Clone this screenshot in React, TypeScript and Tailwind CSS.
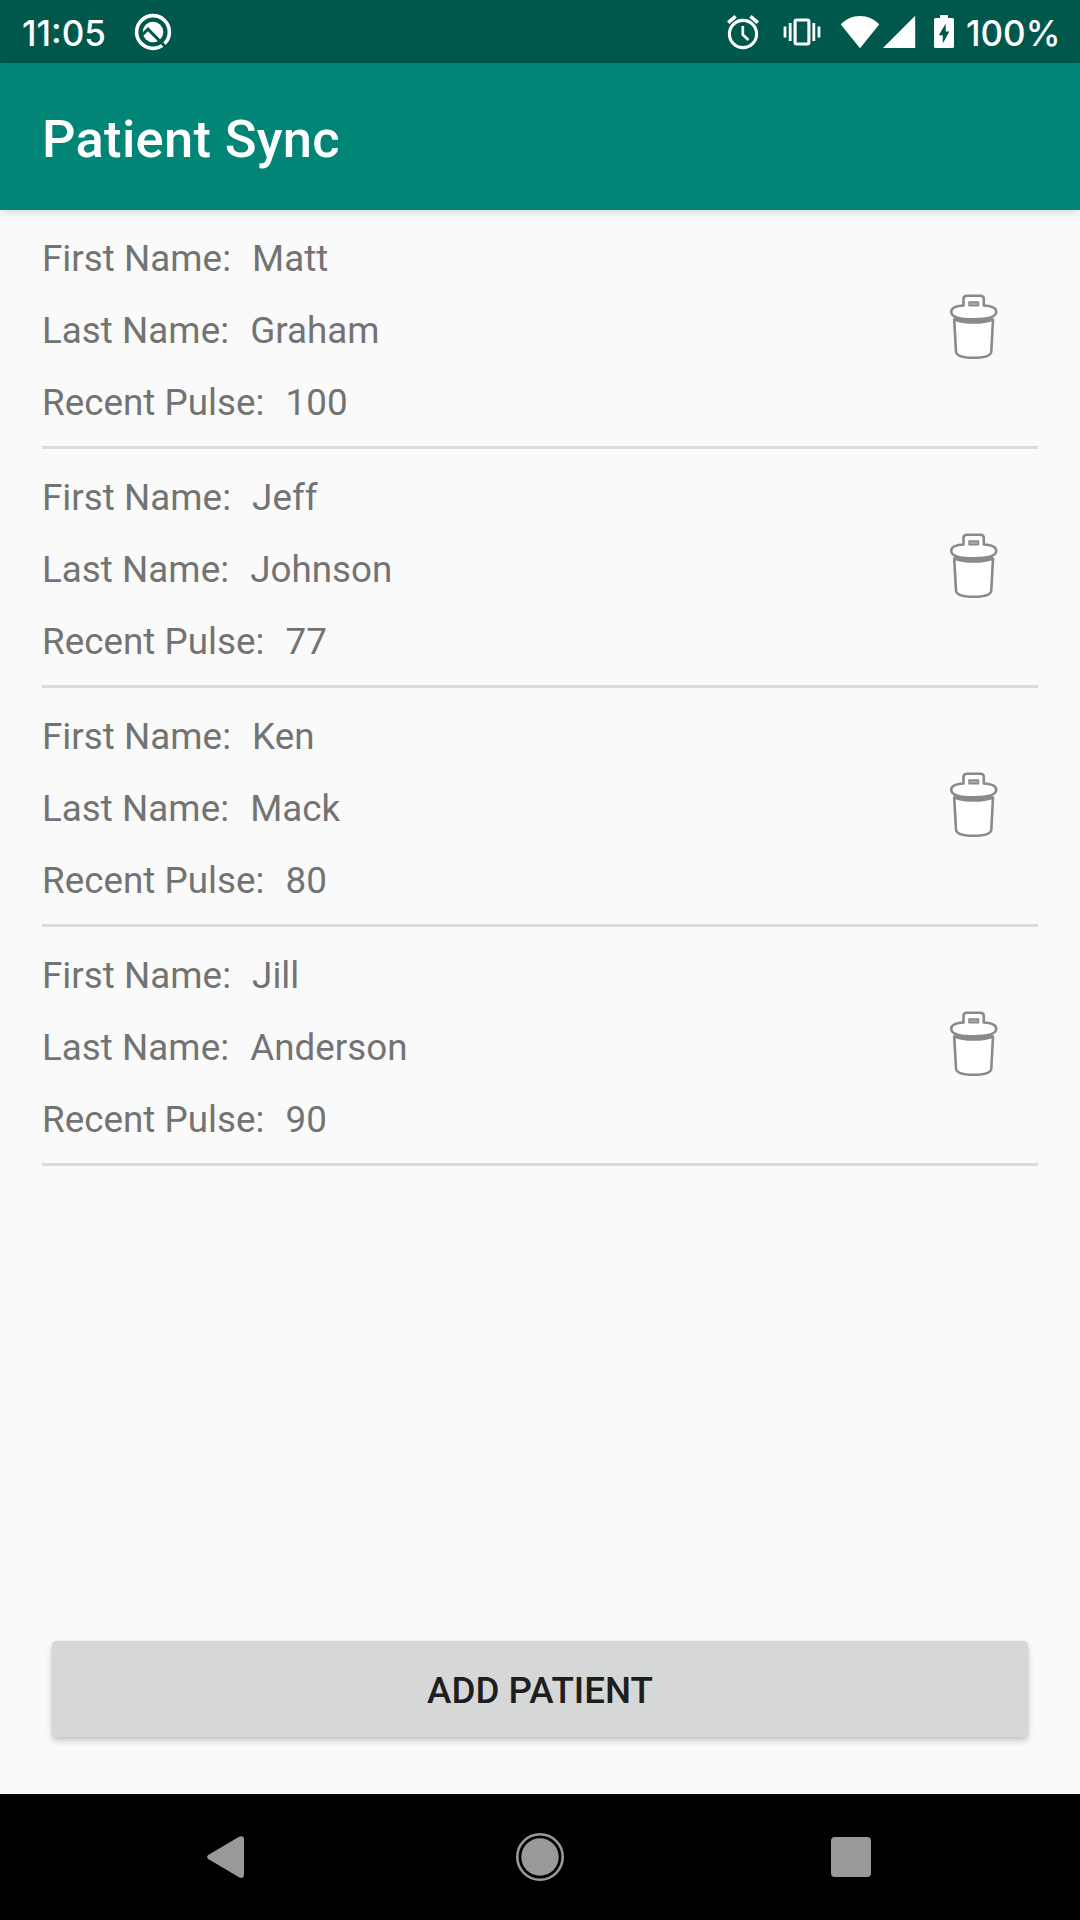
const patients = [
  { first: 'Matt', last: 'Graham', pulse: 100 },
  { first: 'Jeff', last: 'Johnson', pulse: 77 },
  { first: 'Ken', last: 'Mack', pulse: 80 },
  { first: 'Jill', last: 'Anderson', pulse: 90 },
];

function QIcon() {
  return (
    <svg className="ml-[28px] h-[38px] w-[38px]" viewBox="0 0 38 38" fill="none">
      <circle cx="19" cy="19" r="16.4" stroke="#fff" strokeWidth="3.6" />
      <circle cx="19" cy="19" r="10.3" fill="#fff" />
      <path d="M7.5 22.5 14 16.2 32.500 34.700" stroke="#00574b" strokeWidth="3" />
    </svg>
  );
}

function AlarmIcon() {
  return (
    <svg className="h-[36px] w-[34px]" viewBox="0 0 34 36" fill="none" stroke="#fff">
      <circle cx="17" cy="20" r="13.6" strokeWidth="3.1" />
      <path d="M16.8 12V20.6L22.4 26" strokeWidth="2.7" />
      <path d="M2.2 8.6 9.6 2.4M31.8 8.6 24.4 2.4" strokeWidth="3.6" />
    </svg>
  );
}

function VibrateIcon() {
  return (
    <svg className="ml-[23px] h-[28px] w-[38px]" viewBox="0 0 38 28" fill="none" stroke="#fff">
      <rect x="12.1" y="2" width="13.8" height="24" rx="1.5" strokeWidth="3.1" />
      <path d="M7.2 5V23M30.8 5V23" strokeWidth="2.8" />
      <path d="M2 8.5V19.5M36 8.5V19.5" strokeWidth="2.8" />
    </svg>
  );
}

function SignalIcons() {
  return (
    <svg className="ml-[19px] h-[34px] w-[77px]" viewBox="0 0 77 34" fill="#fff">
      <path d="M20 33.2.8 9.6C5.5 4 12.3 1 20 1S34.500 4 39.200 9.600Z" />
      <path d="M43 33 75.200 .8V33Z" />
    </svg>
  );
}

function BatteryIcon() {
  return (
    <svg className="ml-[16px] h-[35px] w-[22px]" viewBox="0 0 22 35">
      <path d="M7 1H15V4H19.500A1.500 1.500 0 0 1 21 5.500V32.500A1.500 1.500 0 0 1 19.500 34H2.500A1.500 1.500 0 0 1 1 32.500V5.500A1.500 1.500 0 0 1 2.500 4H7Z" fill="#fff" />
      <path d="M12.700 9.500 5.800 21.300H9.800V29.500L16.300 17.600H12.700Z" fill="#00574b" />
    </svg>
  );
}

function TrashIcon() {
  return (
    <svg className="h-[70px] w-[50px]" viewBox="0 0 50 70" fill="#fff" stroke="#8a8a8a" strokeWidth="2.600" strokeLinejoin="round">
      <path d="M5.200 27.500 7 59.500C7.300 64 13 65.800 24.700 65.800S42 64 42.300 59.500L44 27.500Q37 30.500 24.700 30.500T5.200 27.500Z" />
      <path d="M5.500 27Q12 29 24.700 29T44 27" fill="none" strokeWidth="2.400" />
      <path d="M14.500 13.500V7Q14.500 3.700 18 3.700H31.300Q34.800 3.700 34.800 7V13.500C43 14 47.200 15.500 47.200 19.800C47.200 25.500 38 27.300 24.700 27.300S2.200 25.500 2.200 19.800C2.200 15.500 7 14 14.500 13.500Z" />
      <rect x="20" y="10" width="9.500" height="3.800" fill="#a8a8a8" strokeWidth="1.500" />
    </svg>
  );
}

function Field({ label, value }: { label: string; value: string | number }) {
  return (
    <p className="flex h-[72px] items-center whitespace-pre">
      <span>{label}</span>
      <span className="ml-[21px]">{value}</span>
    </p>
  );
}

export default function App() {
  return (
    <div className="flex h-[1920px] w-[1080px] flex-col overflow-hidden bg-[#fafafa] font-[Roboto,sans-serif]">
      <div className="flex h-[63px] shrink-0 items-center justify-between bg-[#00574b] pl-[22px] pr-[21px] font-[Inter,sans-serif] text-[35px] font-medium text-white">
        <div className="flex items-center">
          <span className="w-[84px] whitespace-nowrap pt-1">11:05</span>
          <QIcon />
        </div>
        <div className="flex items-center">
          <AlarmIcon />
          <VibrateIcon />
          <SignalIcons />
          <BatteryIcon />
          <span className="ml-[11px] w-[93px] whitespace-nowrap pt-1">100%</span>
        </div>
      </div>

      <header className="z-10 flex h-[147px] shrink-0 items-center bg-[#008577] pl-[42px] text-white shadow-[0_3px_8px_rgba(0,0,0,0.12)]">
        <h1 className="pt-[5px] text-[52.500px] font-medium tracking-[0.300px]">Patient Sync</h1>
      </header>

      <main className="flex flex-1 flex-col">
        <ul className="flex-1 px-[42px] text-[36.750px] tracking-[0.040px] text-[#737373]">
          {patients.map((p) => (
            <li key={p.first} className="flex h-[239px] justify-between border-b-[3px] border-[#dbdbdb] pt-[13px]">
              <div>
                <Field label="First Name:" value={p.first} />
                <Field label="Last Name:" value={p.last} />
                <Field label="Recent Pulse:" value={p.pulse} />
              </div>
              <button className="mr-[39px] mt-[69px] h-[70px] w-[50px]" aria-label="Delete">
                <TrashIcon />
              </button>
            </li>
          ))}
        </ul>
        <button className="mx-[52px] mb-[57px] flex h-[96px] items-center justify-center rounded-[5px] bg-[#d6d8d7] pt-[4px] text-[36.750px] font-medium text-[#1e1e1e] shadow-[0_4px_6px_rgba(0,0,0,0.20),0_0_3px_rgba(0,0,0,0.080)]">
          ADD PATIENT
        </button>
      </main>

      <nav className="flex h-[126px] shrink-0 items-center justify-between bg-black pl-[207px] pr-[209px]">
        <svg className="h-[42px] w-[37px]" viewBox="0 0 37 42" fill="#999">
          <path d="M1.200 19 32.500 .5Q37 -1 37 3.500V38.500Q37 43 32.500 41.500L1.200 23Q-1 21 1.200 19Z" />
        </svg>
        <svg className="ml-[5px] h-[48px] w-[48px]" viewBox="0 0 48 48">
          <circle cx="24" cy="24" r="22.700" fill="none" stroke="#999" strokeWidth="2.600" />
          <circle cx="24" cy="24" r="18.700" fill="#999" />
        </svg>
        <div className="h-[40px] w-[40px] rounded-[4px] bg-[#999]" />
      </nav>
    </div>
  );
}
